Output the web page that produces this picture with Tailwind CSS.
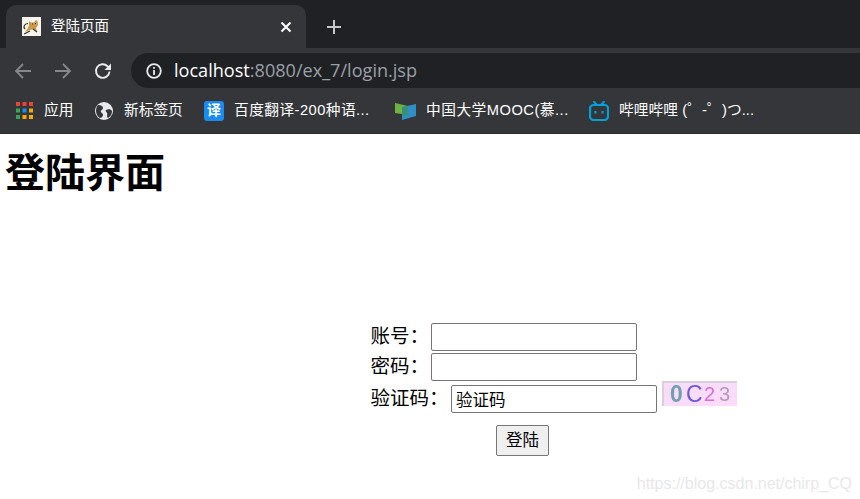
<!DOCTYPE html>
<html lang="zh-CN">
  <head>
    <meta charset="UTF-8" />
    <title>登陆页面</title>
    <script src="https://cdn.jsdelivr.net/npm/@tailwindcss/browser@4"></script>
  </head>
  <body class="relative h-[499px] w-[860px] overflow-hidden bg-white font-['Liberation_Sans','Noto_Sans_CJK_SC',sans-serif] text-black">
    <!-- tab strip -->
    <div class="flex h-12 items-end bg-[#202124] pl-[6px]">
      <div class="flex h-[43px] w-[300px] items-center rounded-t-[10px] bg-[#35363a] pl-[16px] pr-[14px] text-white">
        <svg class="h-[19px] w-[19px]" viewBox="0 0 19 19">
          <rect width="19" height="19" fill="#f7f5ee" />
          <path d="M7 4 9 5.500h3L14 3l1.500 1 .5 4-2 3 1 3-3-2-4 1-5 2 3-4 1-3z" fill="#c99a4c" />
          <path d="M3 12C1 10 2 7 6 6.500M2 17l6-3M11 12l4 3" stroke="#3d3323" stroke-width="1.200" fill="none" />
          <path d="M10 7h1M13 6.500h1" stroke="#3d3323" stroke-width="1" />
        </svg>
        <span class="ml-[10px] flex-1 text-[14.500px]">登陆页面</span>
        <svg class="h-[12px] w-[12px]" viewBox="0 0 12 12">
          <path d="M1.500 1.500l9 9M10.500 1.500l-9 9" stroke="#fff" stroke-width="2" />
        </svg>
      </div>
      <svg class="mb-[13px] ml-[20px] h-[16px] w-[16px]" viewBox="0 0 16 16">
        <path d="M8 1v14M1 8h14" stroke="#c4c6c9" stroke-width="2" />
      </svg>
    </div>

    <!-- toolbar -->
    <div class="flex h-[40px] items-center bg-[#35363a] pl-[14px] pt-[5px]">
      <svg class="h-[18px] w-[18px]" viewBox="0 0 18 18">
        <path d="M17 9H2M9 2 2 9l7 7" stroke="#85878a" stroke-width="1.800" fill="none" />
      </svg>
      <svg class="ml-[22px] h-[18px] w-[18px]" viewBox="0 0 18 18">
        <path d="M1 9h15M9 2l7 7-7 7" stroke="#85878a" stroke-width="1.800" fill="none" />
      </svg>
      <svg class="ml-[22px] h-[18px] w-[18px]" viewBox="0 0 18 18">
        <path d="M15.500 9.500a6.800 6.800 0 1 1-2-5.300L15.500 6" stroke="#e8eaed" stroke-width="1.900" fill="none" />
        <path d="M17 1.500v6.500h-6.500z" fill="#e8eaed" />
      </svg>
      <div class="ml-[19px] flex h-[35px] flex-1 items-center rounded-l-full bg-[#202124] pl-[15px]">
        <svg class="h-[16px] w-[16px]" viewBox="0 0 16 16">
          <circle cx="8" cy="8" r="6.800" stroke="#e8eaed" stroke-width="1.800" fill="none" />
          <path d="M8 7v5M8 4v1.800" stroke="#e8eaed" stroke-width="1.800" />
        </svg>
        <span class="ml-[12px] font-['Open_Sans',sans-serif] text-[18.100px] text-[#9aa0a6]"><span class="text-white">localhost</span>:8080/ex_7/login.jsp</span>
      </div>
    </div>

    <!-- bookmarks -->
    <div class="flex h-[46px] items-center whitespace-nowrap border-b border-[#2b2c2f] bg-[#35363a] text-[14.700px] text-white">
      <svg class="ml-[16px] h-[17px] w-[17px]" viewBox="0 0 17 17">
        <path d="M0 0h4v4H0zM6.500 0h4v4h-4zM13 0h4v4h-4z" fill="#ea4335" />
        <path d="M0 6.500h4v4H0z" fill="#34a853" />
        <path d="M6.500 6.500h4v4h-4z" fill="#1a8cf0" />
        <path d="M13 6.500h4v4h-4z" fill="#f9ab00" />
        <path d="M0 13h4v4H0z" fill="#34a853" />
        <path d="M6.500 13h4v4h-4zM13 13h4v4h-4z" fill="#f9ab00" />
      </svg>
      <span class="ml-[11px] w-[29px]">应用</span>
      <svg class="ml-[22px] h-[18px] w-[18px]" viewBox="0 0 18 18">
        <circle cx="9" cy="9" r="9" fill="#e8eaed" />
        <path d="M3 3c3 0 5 1 5 3S5 8 6 10s2 1 2 3-2 3-3 3c-2-1-4-4-4-7s1-5 2-6zM11 8c2-1 5-1 6 1 0 3-1 5-4 7-2-2 0-3-1-5s-2-2-1-3z" fill="#35363a" />
      </svg>
      <span class="ml-[11px] w-[59px]">新标签页</span>
      <div class="ml-[21px] flex h-[20px] w-[20px] items-center justify-center rounded-[3px] bg-[#1a8cf0] text-[14px] font-bold">译</div>
      <span class="ml-[10px] w-[135px] tracking-[0.45px]">百度翻译-200种语...</span>
      <svg class="ml-[26px] h-[18px] w-[21px]" viewBox="0 0 21 18">
        <path d="M0 1l13 3v9L0 11z" fill="#6cb33f" />
        <path d="M7 5l14-3v12l-14 4z" fill="#2f8fc4" />
        <path d="M7 5l6-1v9l-6 1z" fill="#3a8f7a" />
      </svg>
      <span class="ml-[10px] w-[142px] tracking-[0.5px]">中国大学MOOC(慕...</span>
      <svg class="ml-[21px] h-[20px] w-[20px]" viewBox="0 0 20 20">
        <path d="M4.500 0l3.500 4M15.500 0L12 4" stroke="#00a1d6" stroke-width="2" />
        <rect x="1" y="4" width="18" height="15" rx="3.500" fill="none" stroke="#00a1d6" stroke-width="2.200" />
        <path d="M6.500 10v2.500M13.500 10v2.500" stroke="#00a1d6" stroke-width="2.200" />
      </svg>
      <span class="ml-[10px] tracking-[0.1px]">哔哩哔哩 (゜-゜)つ...</span>
    </div>

    <!-- page -->
    <h1 class="ml-[5px] mt-[14px] text-[40px] leading-[50px] font-bold">登陆界面</h1>

    <form class="ml-[370.500px] mt-[124px] text-[19.500px] leading-none">
      <div class="flex h-[30px] items-center">
        <label class="w-[60.500px]">账号：</label>
        <input type="text" class="h-[28px] w-[206px] rounded-[2px] border border-[#767676] bg-white px-[2px]" />
      </div>
      <div class="flex h-[30px] items-center">
        <label class="w-[60.500px]">密码：</label>
        <input type="password" class="h-[28px] w-[206px] rounded-[2px] border border-[#767676] bg-white px-[2px]" />
      </div>
      <div class="flex h-[34px] items-center">
        <label class="w-[80.500px]">验证码：</label>
        <input type="text" value="验证码" class="h-[28px] w-[206px] rounded-[2px] border border-[#767676] bg-white px-[4px] text-[16.500px] text-black" />
        <div class="mb-[12px] ml-[5px] flex h-[25px] w-[75px] items-center border-t-2 border-l-2 border-[#d8cfd8] bg-[#f9dcf9] pl-[6px] font-['Liberation_Sans',sans-serif] text-[23px] blur-[0.5px]">
          <span class="w-[16px] font-bold text-[#6f9fb0]">0</span>
          <span class="w-[18px] text-[#6a5ad8]">C</span>
          <span class="w-[15px] text-[20px] text-[#d86fd8]">2</span>
          <span class="text-[20px] text-[#b49ab4]">3</span>
        </div>
      </div>
      <div class="ml-[125.500px] mt-[9px]">
        <button type="button" class="h-[31px] w-[53px] rounded-[2px] border border-[#767676] bg-[#efefef] text-[16.500px]">登陆</button>
      </div>
    </form>

    <!-- csdn watermark over the page -->
    <div class="absolute right-[8px] top-[472px] font-['Liberation_Sans',sans-serif] text-[16px] text-[#e8e8e8]">https://blog.csdn.net/chirp_CQ</div>
  </body>
</html>
